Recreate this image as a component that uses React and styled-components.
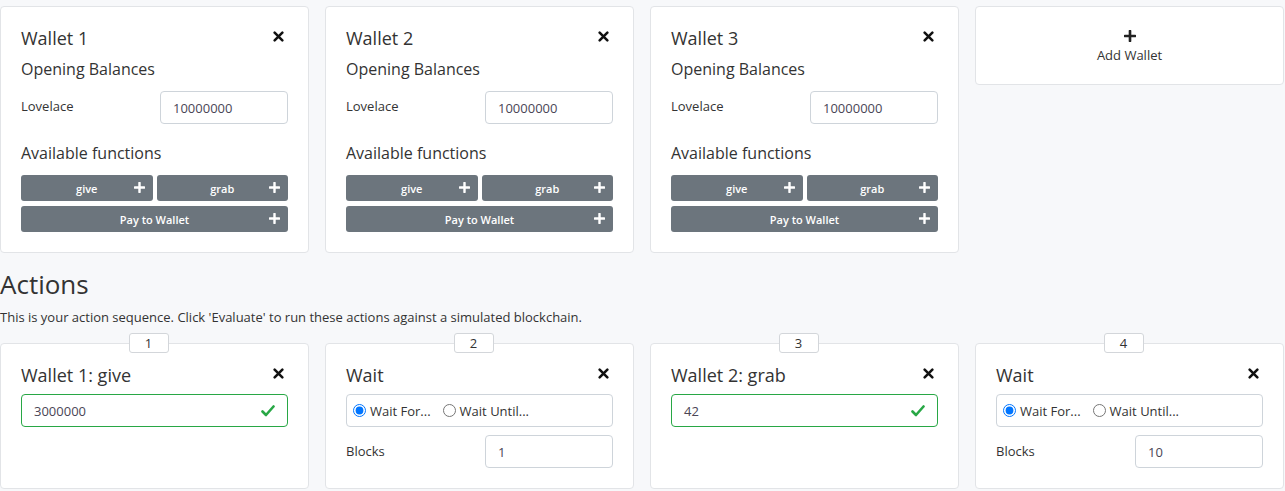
import React from "react";
import styled, { createGlobalStyle } from "styled-components";

const Global = createGlobalStyle`
  * { box-sizing: border-box; }
  html, body { margin: 0; padding: 0; background: #f7f8fa; }
  body {
    font-family: "Open Sans", "Noto Sans", sans-serif;
    color: #333;
    font-size: 13px;
    overflow: hidden;
  }
`;

const Page = styled.div`
  width: 1284px;
  padding-top: 6px;
`;

const Grid = styled.div`
  display: grid;
  grid-template-columns: repeat(4, 1fr);
  column-gap: 16px;
  align-items: ${(p) => (p.$stretch ? "stretch" : "start")};
`;

const Card = styled.div`
  position: relative;
  background: #fff;
  border: 1px solid #e2e4e7;
  border-radius: 4px;
  padding: 20px;
`;

const CardHeader = styled.div`
  display: flex;
  justify-content: space-between;
  align-items: center;
  height: 22px;
  margin-bottom: 8px;
`;

const Title = styled.h3`
  margin: 0;
  font-size: 18px;
  font-weight: 400;
  line-height: 22px;
  color: #333;
`;

const CloseButton = styled.button`
  border: 0;
  background: transparent;
  padding: 0;
  margin-right: 4px;
  margin-top: -3px;
  width: 11px;
  height: 11px;
  display: flex;
  align-items: center;
  justify-content: center;
  color: #111;
  cursor: pointer;
`;

const SubHeading = styled.h4`
  margin: 0;
  font-size: 16px;
  font-weight: 400;
  line-height: 24px;
  color: #333;
  margin-top: ${(p) => p.$mt || 0}px;
`;

const FieldRow = styled.div`
  display: grid;
  grid-template-columns: 1fr 128px;
  align-items: center;
  margin-top: ${(p) => p.$mt || 10}px;
`;

const Label = styled.span`
  font-size: 13px;
  color: #333;
  line-height: 19px;
  margin-top: ${(p) => p.$shift || 0}px;
`;

const TextInput = styled.div`
  height: 33px;
  border: 1px solid ${(p) => (p.$valid ? "#28a745" : "#ced4da")};
  border-radius: 4px;
  padding: 0 12px;
  display: flex;
  align-items: center;
  justify-content: space-between;
  font-size: 13px;
  color: #4a4656;
  background: #fff;
`;

const FnGrid = styled.div`
  display: grid;
  grid-template-columns: 1fr 1fr;
  column-gap: 4px;
  row-gap: 5px;
  margin-top: 10px;
`;

const FnButton = styled.button`
  grid-column: ${(p) => (p.$wide ? "1 / span 2" : "auto")};
  position: relative;
  height: 26px;
  border: 0;
  border-radius: 3px;
  background: #6c757d;
  color: #fff;
  font-family: "Open Sans", sans-serif;
  font-size: 11px;
  font-weight: 600;
  display: flex;
  align-items: center;
  justify-content: center;
  cursor: pointer;
`;

const FnPlus = styled.span`
  position: absolute;
  right: 8px;
  top: 7px;
  display: flex;
`;

const AddCard = styled(Card)`
  display: flex;
  flex-direction: column;
  align-items: center;
  padding: 21px 20px 19px;
`;

const AddIcon = styled.span`
  display: flex;
  height: 16px;
  align-items: center;
  color: #222;
`;

const AddLabel = styled.span`
  font-size: 13px;
  line-height: 19px;
  margin-top: 2px;
  color: #333;
`;

const SectionTitle = styled.h2`
  margin: 16px 0 0 0;
  font-size: 26px;
  font-weight: 400;
  line-height: 31px;
  color: #333;
`;

const SectionText = styled.p`
  margin: 8px 0 0 0;
  font-size: 13px;
  line-height: 19px;
  color: #333;
`;

const ActionGrid = styled(Grid)`
  margin-top: 16px;
`;

const Badge = styled.div`
  position: absolute;
  top: -11px;
  left: calc(50% - 26px);
  width: 40px;
  height: 20px;
  background: #fff;
  border: 1px solid #d3d6da;
  border-radius: 3px;
  display: flex;
  align-items: center;
  justify-content: center;
  font-size: 13px;
  color: #333;
`;

const RadioBox = styled.div`
  height: 33px;
  border: 1px solid #ced4da;
  border-radius: 4px;
  padding: 0 6px;
  display: flex;
  align-items: center;
  gap: 12px;
  font-size: 13px;
  color: #333;
`;

const RadioLabel = styled.label`
  display: flex;
  align-items: center;
  gap: 4px;
`;

const Radio = styled.input`
  margin: 0;
  width: 13px;
  height: 13px;
  accent-color: #0075ff;
`;

const XIcon = () => (
  <svg width="11" height="11" viewBox="0 0 10 10">
    <path d="M1.5 1.5 L8.5 8.5 M8.5 1.5 L1.5 8.5" stroke="currentColor" strokeWidth="2.3" strokeLinecap="round" />
  </svg>
);

const PlusIcon = ({ size = 11 }) => (
  <svg width={size} height={size} viewBox="0 0 10 10">
    <path d="M5 0.8 V9.2 M0.8 5 H9.2" stroke="currentColor" strokeWidth="2.2" strokeLinecap="round" />
  </svg>
);

const Check = () => (
  <svg width="14" height="12" viewBox="0 0 14 12">
    <path d="M1.5 6.5 L5 10 L12.5 1.5" stroke="#28a745" strokeWidth="2.6" fill="none" strokeLinecap="round" strokeLinejoin="round" />
  </svg>
);

function WalletCard({ n }) {
  return (
    <Card>
      <CardHeader>
        <Title>Wallet {n}</Title>
        <CloseButton aria-label="close"><XIcon /></CloseButton>
      </CardHeader>
      <SubHeading>Opening Balances</SubHeading>
      <FieldRow>
        <Label $shift={-2}>Lovelace</Label>
        <TextInput>10000000</TextInput>
      </FieldRow>
      <SubHeading $mt={17}>Available functions</SubHeading>
      <FnGrid>
        <FnButton>give<FnPlus><PlusIcon /></FnPlus></FnButton>
        <FnButton>grab<FnPlus><PlusIcon /></FnPlus></FnButton>
        <FnButton $wide>Pay to Wallet<FnPlus><PlusIcon /></FnPlus></FnButton>
      </FnGrid>
    </Card>
  );
}

function CallAction({ idx, title, value }) {
  return (
    <Card>
      <Badge>{idx}</Badge>
      <CardHeader>
        <Title>{title}</Title>
        <CloseButton aria-label="close"><XIcon /></CloseButton>
      </CardHeader>
      <TextInput $valid>
        <span>{value}</span>
        <Check />
      </TextInput>
    </Card>
  );
}

function WaitAction({ idx, blocks }) {
  return (
    <Card>
      <Badge>{idx}</Badge>
      <CardHeader>
        <Title>Wait</Title>
        <CloseButton aria-label="close"><XIcon /></CloseButton>
      </CardHeader>
      <RadioBox>
        <RadioLabel>
          <Radio type="radio" name={`w${idx}`} defaultChecked />
          Wait For...
        </RadioLabel>
        <RadioLabel>
          <Radio type="radio" name={`w${idx}`} />
          Wait Until...
        </RadioLabel>
      </RadioBox>
      <FieldRow $mt={8}>
        <Label>Blocks</Label>
        <TextInput>{blocks}</TextInput>
      </FieldRow>
    </Card>
  );
}

export default function App() {
  return (
    <>
      <Global />
      <Page>
        <Grid>
          <WalletCard n={1} />
          <WalletCard n={2} />
          <WalletCard n={3} />
          <AddCard>
            <AddIcon><PlusIcon size={12} /></AddIcon>
            <AddLabel>Add Wallet</AddLabel>
          </AddCard>
        </Grid>
        <SectionTitle>Actions</SectionTitle>
        <SectionText>
          This is your action sequence. Click 'Evaluate' to run these actions against a simulated blockchain.
        </SectionText>
        <ActionGrid $stretch>
          <CallAction idx={1} title="Wallet 1: give" value="3000000" />
          <WaitAction idx={2} blocks="1" />
          <CallAction idx={3} title="Wallet 2: grab" value="42" />
          <WaitAction idx={4} blocks="10" />
        </ActionGrid>
      </Page>
    </>
  );
}
